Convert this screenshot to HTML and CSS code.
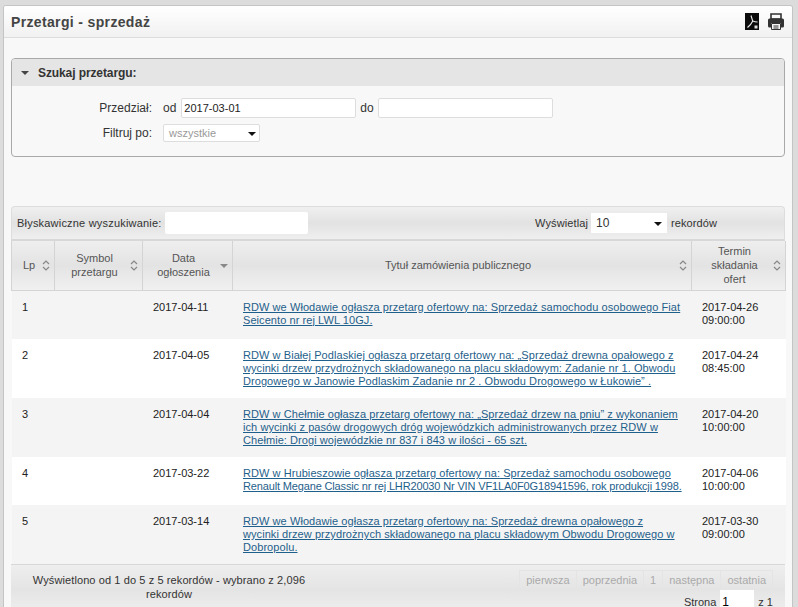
FILE: index.html
```html
<!DOCTYPE html>
<html lang="pl">
<head>
<meta charset="utf-8">
<title>Przetargi - sprzedaż</title>
<link rel="stylesheet" href="styles.css">
</head>
<body>
<div class="panel">
  <header class="head">
    <h1>Przetargi - sprzedaż</h1>
    <div class="tools">
      <svg class="pdf" width="14" height="17" viewBox="0 0 14 17"><rect width="14" height="17" fill="#0c0c0c"/><path d="M6 2.500c.8 2.500 1.300 4.500 1.800 5.500M7.800 8C6.800 10 5 12.500 2.500 14.500M7.800 8c1.200.6 3 1 4.800 1" fill="none" stroke="#e8e8e8" stroke-width="1.200"/><rect x="9.500" y="12.500" width="3" height="3" fill="#ddd"/></svg>
      <svg class="print" width="16" height="17" viewBox="0 0 16 17"><path d="M3 1h10v5H3z" fill="none" stroke="#333" stroke-width="1.600"/><path d="M1.500 5.500h13a1.500 1.500 0 0 1 1.500 1.500v6a1.500 1.500 0 0 1-1.500 1.500H13V10H3v4.500H1.500A1.500 1.500 0 0 1 0 13V7a1.500 1.500 0 0 1 1.500-1.500z" fill="#333"/><path d="M3.500 10.500h9v6h-9z" fill="#f4f4f4" stroke="#333"/><path d="M5.500 13h5M5.500 15h5" stroke="#333"/></svg>
    </div>
  </header>
  <div class="content">
    <section class="search">
      <div class="search-title"><span class="caret"></span><b>Szukaj przetargu:</b></div>
      <div class="form-row r1">
        <label>Przedział:</label><span class="w">od</span><input class="date" value="2017-03-01"><span class="w2">do</span><input class="date">
      </div>
      <div class="form-row r2">
        <label>Filtruj po:</label><div class="sel"><span>wszystkie</span><i class="arrow"></i></div>
      </div>
    </section>
    <section class="grid">
      <div class="toolbar">
        <div class="quick"><span>Błyskawiczne wyszukiwanie:</span><input class="q"></div>
        <div class="len"><span>Wyświetlaj</span><div class="lensel"><span>10</span><i class="arrow"></i></div><span>rekordów</span></div>
      </div>
      <table>
        <colgroup><col class="c1"><col class="c2"><col class="c3"><col class="c4"><col class="c5"></colgroup>
        <thead>
          <tr>
            <th><div class="th"><span>Lp</span><svg class="s" width="8" height="11" viewBox="0 0 8 11"><path d="M1 4 4 1 7 4M1 7 4 10 7 7" fill="none" stroke="#888" stroke-width="1.200"/></svg></div></th>
            <th><div class="th"><span>Symbol<br>przetargu</span><svg class="s" width="8" height="11" viewBox="0 0 8 11"><path d="M1 4 4 1 7 4M1 7 4 10 7 7" fill="none" stroke="#888" stroke-width="1.200"/></svg></div></th>
            <th><div class="th"><span>Data<br>ogłoszenia</span><svg class="s" width="8" height="11" viewBox="0 0 8 11"><path d="M0 4h8L4 8z" fill="#888"/></svg></div></th>
            <th><div class="th"><span>Tytuł zamówienia publicznego</span><svg class="s" width="8" height="11" viewBox="0 0 8 11"><path d="M1 4 4 1 7 4M1 7 4 10 7 7" fill="none" stroke="#888" stroke-width="1.200"/></svg></div></th>
            <th><div class="th"><span>Termin<br>składania<br>ofert</span><svg class="s" width="8" height="11" viewBox="0 0 8 11"><path d="M1 4 4 1 7 4M1 7 4 10 7 7" fill="none" stroke="#888" stroke-width="1.200"/></svg></div></th>
          </tr>
        </thead>
        <tbody>
          <tr class="odd"><td>1</td><td></td><td>2017-04-11</td><td><a href="#">RDW we Włodawie ogłasza przetarg ofertowy na: Sprzedaż samochodu osobowego Fiat<br>Seicento nr rej LWL 10GJ.</a></td><td>2017-04-26<br>09:00:00</td></tr>
          <tr><td>2</td><td></td><td>2017-04-05</td><td><a href="#">RDW w Białej Podlaskiej ogłasza przetarg ofertowy na: „Sprzedaż drewna opałowego z<br>wycinki drzew przydrożnych składowanego na placu składowym: Zadanie nr 1. Obwodu<br>Drogowego w Janowie Podlaskim Zadanie nr 2 . Obwodu Drogowego w Łukowie” .</a></td><td>2017-04-24<br>08:45:00</td></tr>
          <tr class="odd"><td>3</td><td></td><td>2017-04-04</td><td><a href="#">RDW w Chełmie ogłasza przetarg ofertowy na: „Sprzedaż drzew na pniu” z wykonaniem<br>ich wycinki z pasów drogowych dróg wojewódzkich administrowanych przez RDW w<br>Chełmie: Drogi wojewódzkie nr 837 i 843 w ilości - 65 szt.</a></td><td>2017-04-20<br>10:00:00</td></tr>
          <tr><td>4</td><td></td><td>2017-03-22</td><td><a href="#">RDW w Hrubieszowie ogłasza przetarg ofertowy na: Sprzedaż samochodu osobowego<br><span class="tight">Renault Megane Classic nr rej LHR20030 Nr VIN VF1LA0F0G18941596, rok produkcji 1998.</span></a></td><td>2017-04-06<br>10:00:00</td></tr>
          <tr class="odd"><td>5</td><td></td><td>2017-03-14</td><td><a href="#">RDW we Włodawie ogłasza przetarg ofertowy na: Sprzedaż drewna opałowego z<br>wycinki drzew przydrożnych składowanego na placu składowym Obwodu Drogowego w<br>Dobropolu.</a></td><td>2017-03-30<br>09:00:00</td></tr>
        </tbody>
      </table>
      <div class="foot">
        <div class="info">Wyświetlono od 1 do 5 z 5 rekordów - wybrano z 2,096 rekordów</div>
        <div class="paging">
          <div class="pages"><span>pierwsza</span><span>poprzednia</span><span>1</span><span>następna</span><span>ostatnia</span></div>
          <div class="page-input"><span>Strona</span><input class="pg" value="1"><span>z 1</span></div>
        </div>
      </div>
    </section>
  </div>
</div>
</body>
</html>
```

FILE: styles.css
```css
html, body { margin: 0; padding: 0; height: 607px; overflow: hidden; }
body { background: #dcdcdc; font-family: "Liberation Sans", Arial, sans-serif; font-size: 12px; color: #333; padding: 5px 5px 0 3px; box-sizing: border-box; }
.panel { background: #f8f8f8; border: 1px solid #c4c4c4; border-bottom: 0; border-radius: 3px 3px 0 0; height: 602px; box-sizing: border-box; overflow: hidden; }
.head { height: 31px; display: flex; justify-content: space-between; align-items: center; padding: 0 8px 0 7px; background: linear-gradient(#ffffff, #f1f1f1); border-bottom: 1px solid #dcdcdc; }
h1 { margin: 0; font-size: 14px; font-weight: bold; color: #444; letter-spacing: .35px; }
.tools { display: flex; gap: 9px; align-items: center; }
.pdf, .print { display: block; }
.content { padding: 20px 7px 0 7px; }
.search { border: 1px solid #a9a9a9; border-radius: 4px; height: 99px; box-sizing: border-box; background: #f8f8f8; }
.search-title { height: 27px; background: #e5e5e5; display: flex; align-items: center; padding-left: 9px; border-radius: 3px 3px 0 0; font-size: 12px; color: #333; letter-spacing: -.1px; }
.caret { width: 0; height: 0; border: 4px solid transparent; border-top: 4px solid #444; border-bottom: 0; margin-right: 9px; }
.form-row { display: flex; align-items: center; }
.r1 { margin-top: 12px; }
.r2 { margin-top: 6px; }
label { width: 140px; text-align: right; color: #333; }
.w { margin-left: 11px; margin-right: 5px; }
.w2 { margin-left: 4px; margin-right: 4px; }
input { font-family: "Liberation Sans", Arial, sans-serif; box-sizing: border-box; outline: none; }
.date { width: 175px; height: 20px; border: 1px solid #ddd; border-radius: 2px; background: #fff; font-size: 11px; color: #222; padding: 0 2px; }
.sel { margin-left: 11px; width: 97px; height: 18px; border: 1px solid #ddd; border-radius: 2px; box-sizing: border-box; background: #fff; color: #999; font-size: 11px; display: flex; align-items: center; justify-content: space-between; padding: 0 3px 0 5px; }
.arrow { width: 0; height: 0; border: 4px solid transparent; border-top: 4px solid #111; border-bottom: 0; margin-top: 2px; }
.grid { margin-top: 49px; }
.toolbar { height: 35px; box-sizing: border-box; border: 1px solid #ddd; border-bottom: 2px solid #d8d8d8; border-radius: 4px 4px 0 0; background: linear-gradient(#f0f0f0, #e2e2e2 50%, #efefef); display: flex; justify-content: space-between; align-items: center; padding: 0 67px 0 5px; font-size: 11px; color: #333; }
.quick, .len { display: flex; align-items: center; }
.quick span { letter-spacing: .2px; }
.len { letter-spacing: .1px; }
.q { width: 143px; height: 22px; border: 0; border-radius: 2px; background: #fff; margin-left: 3px; }
.lensel { width: 76px; height: 20px; background: #fff; margin: 0 4px 0 3px; display: flex; align-items: center; justify-content: space-between; padding: 0 5px; box-sizing: border-box; font-size: 12px; }
table { width: 774px; border-collapse: collapse; table-layout: fixed; font-size: 11px; }
.c1 { width: 43px; } .c2 { width: 88px; } .c3 { width: 90px; } .c4 { width: 459px; } .c5 { width: 94px; }
th { height: 49px; padding: 0; font-weight: normal; color: #555; border: 1px solid #d4d4d4; border-top: 0; background: linear-gradient(#eeeeee, #e3e3e3 50%, #f0f0f0); line-height: 14px; box-sizing: border-box; }
.th { display: flex; align-items: center; padding: 0 4px; }
.th span { flex: 1; text-align: center; }
.s { flex: none; }
td { vertical-align: top; padding: 10px 2px 10px 10.5px; line-height: 13px; color: #222; background: #fff; white-space: nowrap; }
.odd td { background: #f4f4f4; }
td a { color: #1f5f8b; letter-spacing: .07px; }
td a .tight { letter-spacing: -.15px; }
tbody tr { height: 48px; }
tbody tr:first-child { height: 49px; }
.foot { height: 50px; background: linear-gradient(#eeeeee, #e4e4e4 50%, #f0f0f0); border-top: 1px solid #d8d8d8; display: flex; justify-content: space-between; font-size: 11px; letter-spacing: .1px; color: #333; }
.info { width: 306px; margin-left: 5px; padding-top: 8px; text-align: center; line-height: 14px; }
.paging { width: 270px; padding: 5px 12px 0 0; letter-spacing: 0; }
.pages { display: flex; justify-content: flex-end; color: #aaa; }
.pages span { padding: 3px 6px; border: 1px solid #e4e4e4; margin-left: -1px; line-height: 12px; }
.page-input { display: flex; justify-content: flex-end; align-items: center; margin-top: 0; gap: 4px; }
.pg { width: 34px; height: 24px; border: 0; background: #fff; font-size: 12px; padding: 0 2px; }
```
